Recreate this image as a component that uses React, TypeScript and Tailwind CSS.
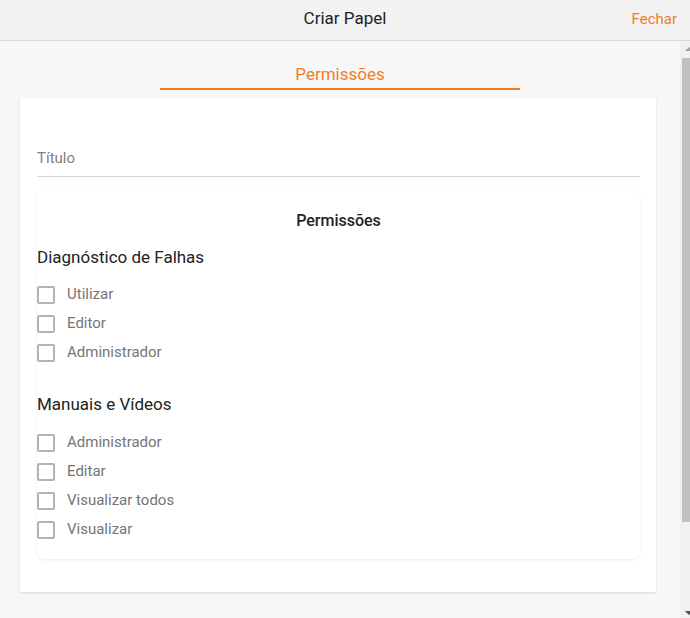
import {useState} from "react"

const groups = [
  {title: "Diagnóstico de Falhas", items: ["Utilizar", "Editor", "Administrador"]},
  {title: "Manuais e Vídeos", items: ["Administrador", "Editar", "Visualizar todos", "Visualizar"]},
]

const Check = ({label}: {label: string}) => {
  const [on, setOn] = useState(false)
  return (
    <label className="flex h-[29px] cursor-pointer items-center" onClick={() => setOn(!on)}>
      <span
        className={`h-[18px] w-[18px] rounded-[2px] border-2 ${on ? "border-[#f57c1f] bg-[#f57c1f]" : "border-[#b3b3b3] bg-white"}`}
      />
      <span className="ml-[12px] text-[15px] text-[#757575]">{label}</span>
    </label>
  )
}

export default function App() {
  return (
    <div className="flex h-[618px] w-[690px] flex-col overflow-hidden bg-[#f7f7f7] font-['Roboto','Liberation_Sans',sans-serif]">
      <div className="relative flex h-[41px] shrink-0 items-center justify-center border-b border-[#d9d9d9] bg-[#f2f2f2] pb-[2px]">
        <div className="text-[17px] text-[#222]">Criar Papel</div>
        <button className="absolute right-[13px] top-[8px] text-[15px] text-[#f57c1f]">Fechar</button>
      </div>

      <div className="flex min-h-0 flex-1">
        <div className="flex-1">
          <div className="flex justify-center pt-[21px]">
            <div className="w-[360px] border-b-2 border-[#f57c1f] pb-[2px] text-center text-[17px] leading-6 text-[#f57c1f]">
              Permissões
            </div>
          </div>

          <div className="ml-[20px] mt-[8px] w-[636px] bg-white pb-[33px] pl-[17px] pr-[16px] pt-[48px] shadow-[0_1px_2px_rgba(0,0,0,0.12)]">
            <div className="border-b border-[#d6d6d6] pb-[6px] text-[15px] leading-6 text-[#808080]">Título</div>

            <div className="mt-[13px] rounded-lg bg-white pb-[15px] pt-[19px] shadow-[0_1px_3px_rgba(0,0,0,0.08)]">
              <div className="text-center text-[16px] font-medium leading-6 text-[#222]">Permissões</div>
              {groups.map((g, i) => (
                <div key={g.title} className={i === 0 ? "mt-[12px]" : "mt-[25px]"}>
                  <div className="text-[17px] leading-6 text-[#222]">{g.title}</div>
                  <div className={i === 0 ? "mt-[11px]" : "mt-[12px]"}>
                    {g.items.map(item => (
                      <Check key={item} label={item} />
                    ))}
                  </div>
                </div>
              ))}
            </div>
          </div>
        </div>

        {/* fake scrollbar */}
        <div className="relative w-[10px] bg-[#f1f1f1]">
          <div className="absolute left-[5px] top-[6px] h-0 w-0 border-x-[4px] border-b-[4px] border-x-transparent border-b-[#a3a3a3]" />
          <div className="absolute left-[2px] right-0 top-[17px] h-[464px] bg-[#c1c1c1]" />
          <div className="absolute bottom-[3px] left-[5px] h-0 w-0 border-x-[4px] border-t-[4px] border-x-transparent border-t-[#505050]" />
        </div>
      </div>
    </div>
  )
}
